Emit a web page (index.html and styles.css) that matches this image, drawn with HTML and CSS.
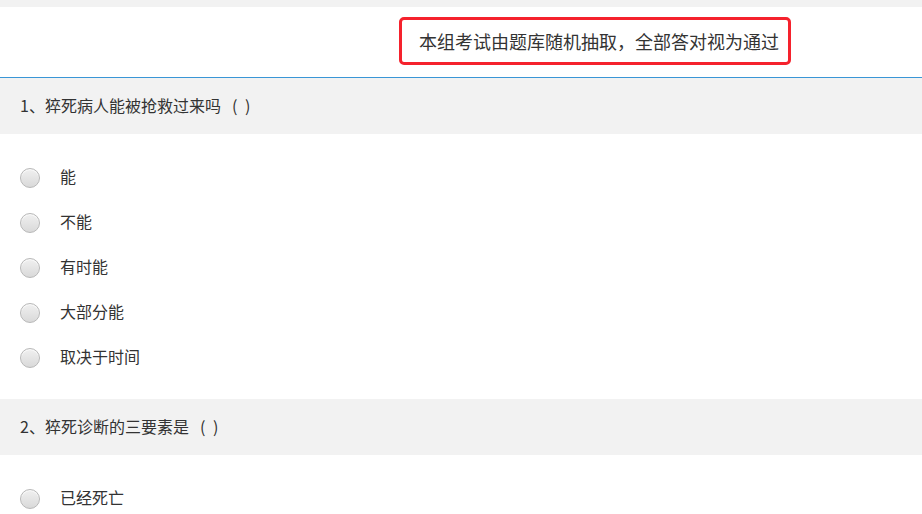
FILE: index.html
```html
<!DOCTYPE html>
<html lang="zh-CN">
<head>
<meta charset="utf-8">
<link rel="stylesheet" href="styles.css">
</head>
<body>
<div class="topstrip"></div>
<header class="header">
  <div class="notice">本组考试由题库随机抽取，全部答对视为通过</div>
</header>
<section class="question">
  <div class="q-title">1、猝死病人能被抢救过来吗<span class="blank">( )</span></div>
  <ul class="options">
    <li class="option"><span class="radio"></span><span class="label">能</span></li>
    <li class="option"><span class="radio"></span><span class="label">不能</span></li>
    <li class="option"><span class="radio"></span><span class="label">有时能</span></li>
    <li class="option"><span class="radio"></span><span class="label">大部分能</span></li>
    <li class="option"><span class="radio"></span><span class="label">取决于时间</span></li>
  </ul>
</section>
<section class="question">
  <div class="q-title">2、猝死诊断的三要素是<span class="blank">( )</span></div>
  <ul class="options">
    <li class="option"><span class="radio"></span><span class="label">已经死亡</span></li>
  </ul>
</section>
</body>
</html>
```

FILE: styles.css
```css
html, body {
  margin: 0;
  padding: 0;
  background: #ffffff;
  font-family: "Noto Sans CJK SC", "Noto Sans", sans-serif;
  color: #333333;
  overflow: hidden;
}
.topstrip {
  height: 7px;
  background: #f2f2f2;
}
.header {
  height: 70px;
  border-bottom: 1px solid #3a96d6;
  display: flex;
  justify-content: flex-end;
  align-items: flex-start;
  padding-right: 131px;
}
.notice {
  margin-top: 10px;
  width: 392px;
  height: 48px;
  box-sizing: border-box;
  border: 3px solid #f5222d;
  border-radius: 5px;
  padding-left: 17px;
  font-size: 18px;
  line-height: 42px;
  color: #333333;
  white-space: nowrap;
}
.q-title {
  height: 56px;
  background: #f2f2f2;
  padding-left: 20px;
  font-size: 16px;
  line-height: 54px;
  color: #333333;
}
.blank {
  margin-left: 11px;
  word-spacing: 4px;
  white-space: pre;
}
.options {
  list-style: none;
  margin: 0;
  padding: 21px 0 19px 0;
}
.option {
  height: 45px;
  display: flex;
  align-items: center;
  padding-left: 20px;
  font-size: 16px;
  line-height: 20px;
  color: #333333;
}
.radio {
  width: 18px;
  height: 18px;
  border-radius: 50%;
  border: 1px solid #b8b8b8;
  background: linear-gradient(#f0f0f0, #d9d9d9);
  box-shadow: inset 0 1px 1px rgba(255,255,255,0.8);
  flex: none;
}
.label {
  margin-left: 20px;
  position: relative;
  top: -2px;
}
```
